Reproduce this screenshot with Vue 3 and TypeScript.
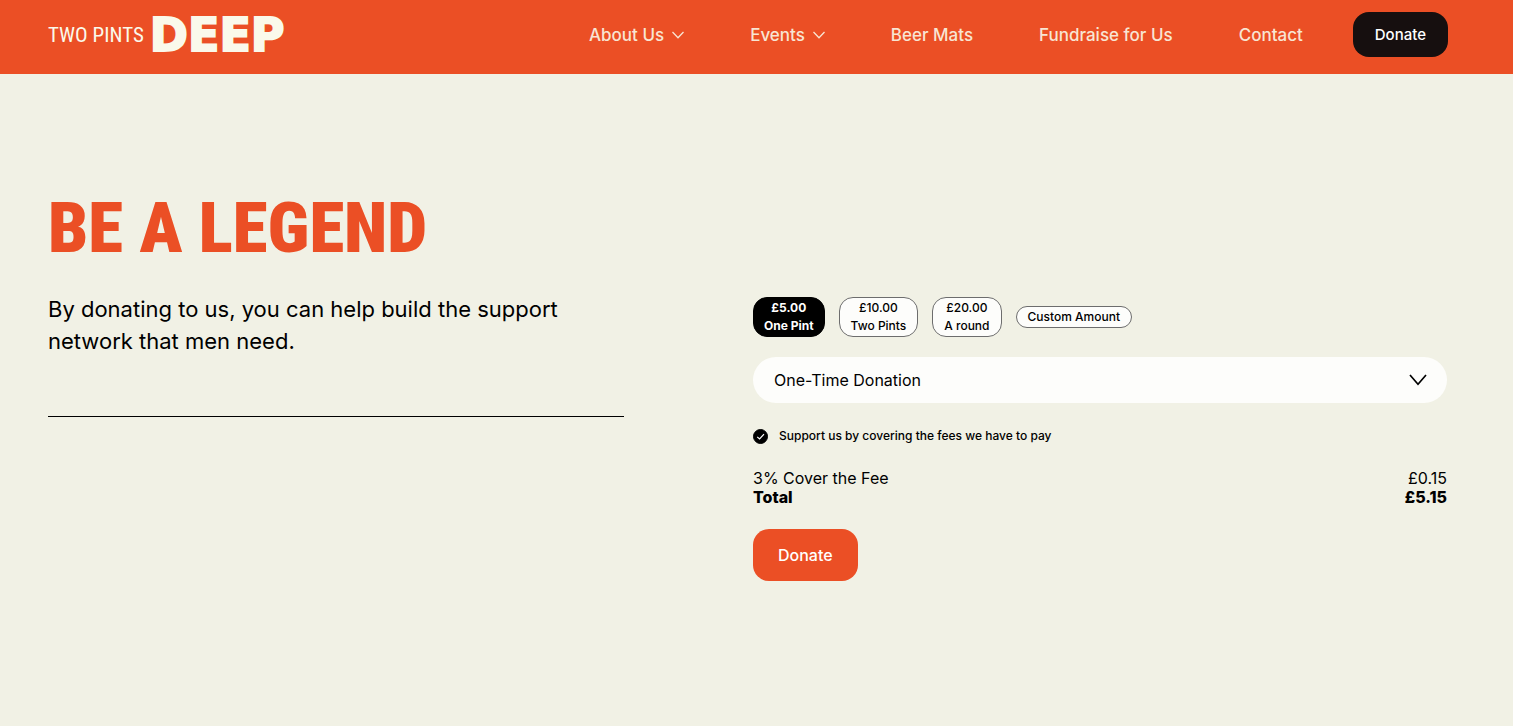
<script setup lang="ts">
import { computed, ref } from 'vue'

interface NavItem {
  label: string
  menu: boolean
}

interface Amount {
  value: number
  label: string
}

const navItems: NavItem[] = [
  { label: 'About Us', menu: true },
  { label: 'Events', menu: true },
  { label: 'Beer Mats', menu: false },
  { label: 'Fundraise for Us', menu: false },
  { label: 'Contact', menu: false },
]

const amounts: Amount[] = [
  { value: 5, label: 'One Pint' },
  { value: 10, label: 'Two Pints' },
  { value: 20, label: 'A round' },
]

const selected = ref(5)
const coverFee = ref(true)
const frequency = ref('once')

const fee = computed(() => (coverFee.value ? selected.value * 0.03 : 0))
const total = computed(() => selected.value + fee.value)
const money = (n: number): string => '£' + n.toFixed(2)
</script>

<template>
  <div class="page">
    <header class="header">
      <a class="logo" href="#" aria-label="Two Pints Deep">
        <span class="logo-narrow">TWO PINTS</span>
        <span class="logo-wide">DEEP</span>
      </a>
      <nav class="nav">
        <a v-for="item in navItems" :key="item.label" class="nav-link" href="#">
          {{ item.label }}
          <svg v-if="item.menu" class="nav-chevron" viewBox="0 0 12 8" aria-hidden="true">
            <path d="M0.5 1L6 6.8L11.5 1" fill="none" stroke="currentColor" stroke-width="1.3" />
          </svg>
        </a>
      </nav>
      <a class="header-donate" href="#donate">Donate</a>
    </header>

    <main class="main">
      <section class="intro">
        <h1 class="title">BE A LEGEND</h1>
        <p class="lead">By donating to us, you can help build the support network that men need.</p>
        <hr class="rule" />
      </section>

      <form id="donate" class="form" @submit.prevent>
        <div class="amounts" role="group" aria-label="Donation amount">
          <button
            v-for="a in amounts"
            :key="a.value"
            type="button"
            class="amount"
            :class="{ active: selected === a.value }"
            :aria-pressed="selected === a.value"
            @click="selected = a.value"
          >
            <span>{{ money(a.value) }}</span>
            <span>{{ a.label }}</span>
          </button>
          <button type="button" class="amount">Custom Amount</button>
        </div>

        <div class="select-wrap">
          <select v-model="frequency" class="select" aria-label="Donation frequency">
            <option value="once">One-Time Donation</option>
            <option value="monthly">Monthly Donation</option>
          </select>
          <svg class="select-chevron" viewBox="0 0 18 12" aria-hidden="true">
            <path d="M1 1L9 10.2L17 1" fill="none" stroke="#000" stroke-width="1.7" />
          </svg>
        </div>

        <label class="cover">
          <span class="check">
            <input v-model="coverFee" class="check-input" type="checkbox" />
            <svg class="check-mark" viewBox="0 0 15 15" aria-hidden="true">
              <path d="M4.2 7.9L6.6 10L11 5.1" fill="none" stroke="#fff" stroke-width="1.2" />
            </svg>
          </span>
          Support us by covering the fees we have to pay
        </label>

        <dl class="summary">
          <div class="row">
            <dt>3% Cover the Fee</dt>
            <dd>{{ money(fee) }}</dd>
          </div>
          <div class="row total">
            <dt>Total</dt>
            <dd>{{ money(total) }}</dd>
          </div>
        </dl>

        <button class="submit" type="submit">Donate</button>
      </form>
    </main>
  </div>
</template>

<style>
body {
  margin: 0;
  background: #f1f1e5;
}
</style>

<style scoped>
.page {
  min-height: 100vh;
  background: #f1f1e5;
  color: #000;
  font-family: Inter, 'Liberation Sans', sans-serif;
  font-size: 16px;
}

.header {
  display: flex;
  align-items: center;
  box-sizing: border-box;
  min-height: 74px;
  padding: 0 65px 5px 48px;
  background: #eb4f25;
}

.logo {
  display: flex;
  align-items: center;
  gap: 6px;
  margin-right: auto;
  color: #faf9eb;
  line-height: 40px;
  text-decoration: none;
  white-space: nowrap;
}

.logo-narrow {
  font-family: 'Roboto Condensed', Roboto, sans-serif;
  font-size: 21px;
}

.logo-wide {
  font-family: 'DejaVu Sans', sans-serif;
  font-size: 46px;
  font-weight: 700;
  -webkit-text-stroke: 2px #faf9eb;
}

.nav {
  display: flex;
  gap: 66px;
}

.nav-link {
  display: flex;
  align-items: center;
  gap: 8px;
  color: #f8e5d3;
  font-size: 17px;
  font-weight: 500;
  line-height: 24px;
  text-decoration: none;
  white-space: nowrap;
}

.nav-chevron {
  width: 12px;
  height: 8px;
}

.header-donate {
  margin-left: 50px;
  padding: 0 22px;
  border-radius: 16px;
  background: #160f0f;
  color: #fff;
  font-size: 15px;
  font-weight: 500;
  line-height: 45px;
  text-decoration: none;
}

.main {
  display: grid;
  grid-template-columns: 576fr 694fr;
  column-gap: 129px;
  align-items: start;
  padding: 112px 66px 48px 48px;
}

.title {
  margin: 0;
  color: #eb4f25;
  font-family: 'Roboto Condensed', Roboto, sans-serif;
  font-size: 71px;
  font-weight: 900;
  line-height: 84px;
  white-space: nowrap;
}

.lead {
  margin: 23px 0 59px;
  font-size: 22px;
  line-height: 32px;
}

.rule {
  margin: 0;
  border: 0;
  border-top: 1px solid #000;
}

.form {
  padding-top: 111px;
}

.amounts {
  display: flex;
  flex-wrap: wrap;
  align-items: center;
  gap: 14px;
}

.amount {
  display: flex;
  flex-direction: column;
  align-items: center;
  padding: 1px 11px;
  border: 1px solid #6d6d6d;
  border-radius: 14px;
  background: #fdfdfb;
  color: #000;
  font-family: inherit;
  font-size: 12px;
  font-weight: 500;
  line-height: 18px;
}

.amount.active {
  padding: 1px 10px;
  border-color: #000;
  background: #000;
  color: #fff;
  font-weight: 700;
}

.select-wrap {
  position: relative;
  margin-top: 20px;
}

.select {
  display: block;
  width: 100%;
  height: 46px;
  padding: 0 48px 0 21px;
  border: 0;
  border-radius: 23px;
  appearance: none;
  background: #fdfdfb;
  color: #000;
  font-family: inherit;
  font-size: 16px;
}

.select-chevron {
  position: absolute;
  top: 17px;
  right: 20px;
  width: 18px;
  height: 12px;
  pointer-events: none;
}

.cover {
  display: flex;
  align-items: center;
  gap: 11px;
  margin-top: 24px;
  font-size: 12px;
  font-weight: 500;
  line-height: 18px;
}

.check {
  position: relative;
  display: flex;
}

.check-input {
  width: 15px;
  height: 15px;
  margin: 0;
  border: 1px solid #000;
  border-radius: 50%;
  appearance: none;
  background: #fdfdfb;
}

.check-input:checked {
  background: #000;
}

.check-mark {
  position: absolute;
  inset: 0;
  width: 15px;
  height: 15px;
  pointer-events: none;
}

.summary {
  margin: 24px 0 0;
}

.row {
  display: flex;
  justify-content: space-between;
  line-height: 19px;
}

.row dd {
  margin: 0;
}

.total {
  font-weight: 800;
}

.submit {
  margin-top: 22px;
  padding: 0 25px;
  border: 0;
  border-radius: 16px;
  background: #eb4f25;
  color: #fff;
  font-family: inherit;
  font-size: 16px;
  font-weight: 500;
  line-height: 52px;
}
</style>
